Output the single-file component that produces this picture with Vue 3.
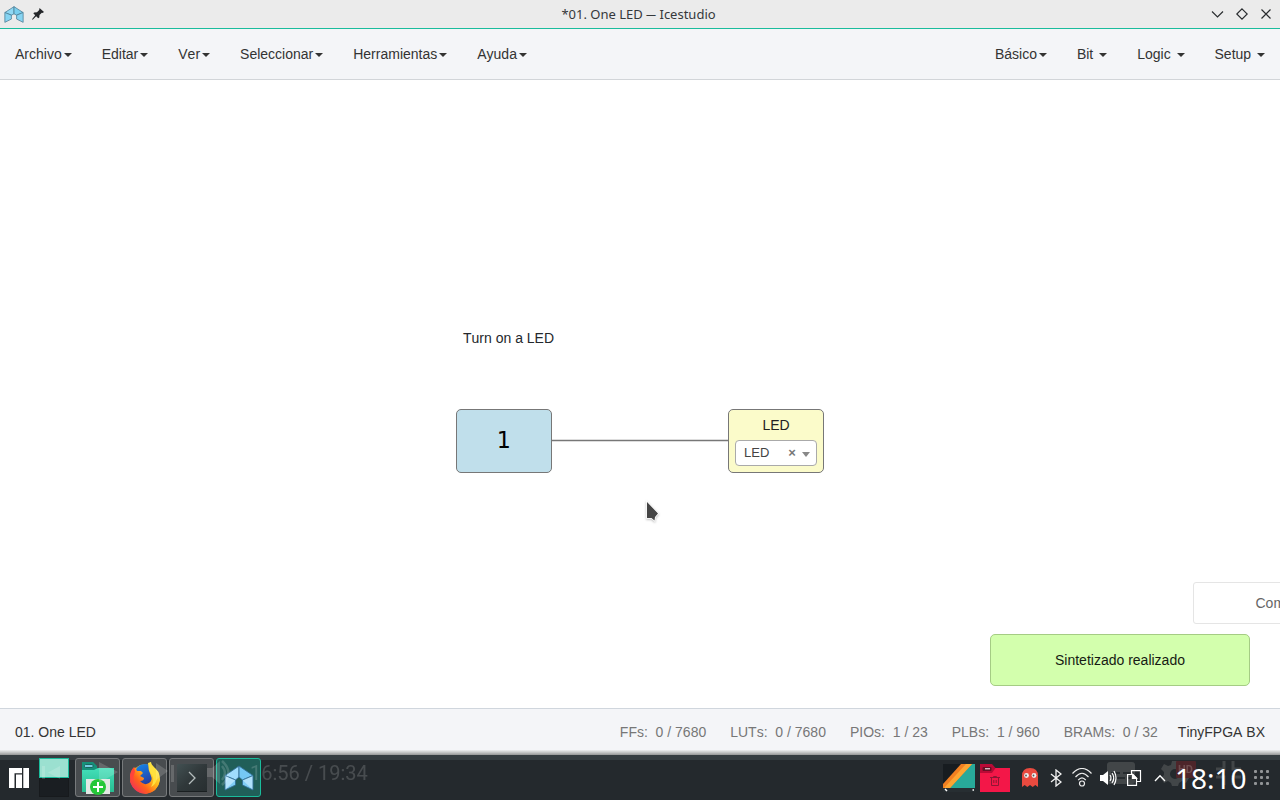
<script setup>
const leftMenus = ['Archivo', 'Editar', 'Ver', 'Seleccionar', 'Herramientas', 'Ayuda']
const rightMenus = ['Básico', 'Bit ', 'Logic ', 'Setup ']
const resources = [
  { name: 'FFs', value: '0 / 7680' },
  { name: 'LUTs', value: '0 / 7680' },
  { name: 'PIOs', value: '1 / 23' },
  { name: 'PLBs', value: '1 / 960' },
  { name: 'BRAMs', value: '0 / 32' },
]
const dots = [0, 1, 2, 3, 4, 5, 6, 7, 8]
</script>

<template>
  <div class="desktop">
    <header class="titlebar">
      <div class="title-left">
        <svg class="app-logo" width="20" height="17" viewBox="0 0 30 26" stroke="#4c7d96" stroke-width="1.2" stroke-linejoin="round">
          <path d="M15 1V12L11 14 1 10Z" fill="#8fd8f4" /><path d="M15 1V12L19 14 29 10Z" fill="#79cfef" />
          <path d="M1 10 11 14V20L1 25Z" fill="#86d4f2" /><path d="M29 10 19 14V20L29 25Z" fill="#86d4f2" />
        </svg>
        <svg width="12" height="12" viewBox="0 0 12 12" fill="#232629">
          <path d="M7.5 0 12 4 10.5 5 9.8 4.8 7.5 7 7.3 9.5 6.2 10.3 4.2 8.2 .7 11.8 0 11.3 3.2 7.2 1.3 5.3 2.2 4.5 5 4.3 7.2 2Z" />
        </svg>
      </div>
      <span class="window-title">*01. One LED <span class="dash">—</span> Icestudio</span>
      <svg class="window-controls" width="62" height="14" viewBox="0 0 62 14" fill="none" stroke="#292c2f" stroke-width="1.15">
        <path d="M1 4.5 6.5 10 12 4.5M31 1.8 36.2 7 31 12.2 25.8 7ZM50.5 2.5 59.5 11.5M59.5 2.5 50.5 11.5" />
      </svg>
    </header>

    <nav class="navbar">
      <div class="menu-group">
        <span v-for="m in leftMenus" :key="m" class="menu">{{ m }}<b class="caret"></b></span>
      </div>
      <div class="menu-group">
        <span v-for="m in rightMenus" :key="m" class="menu">{{ m }}<b class="caret"></b></span>
      </div>
    </nav>

    <main class="canvas">
      <span class="note">Turn on a LED</span>
      <svg class="wire" width="178" height="3" viewBox="0 0 178 3"><path d="M0 1.5H178" stroke="#777" stroke-width="1.6" /></svg>
      <div class="block constant">1</div>
      <div class="block output">
        <span class="block-label">LED</span>
        <div class="pin-select">
          <span>LED</span>
          <b class="clear">×</b>
          <i class="select-arrow"></i>
        </div>
      </div>
      <svg class="pointer" width="18" height="26" viewBox="0 0 18 26">
        <path d="M4 3V19H8.5L11.5 21.5 12 18 15 14.5Z" fill="#444" stroke="#fff" stroke-width="1.6" paint-order="stroke" />
      </svg>
      <div class="toast neutral">Comenzando</div>
      <div class="toast success">Sintetizado realizado</div>
    </main>

    <footer class="statusbar">
      <span>01. One LED</span>
      <div class="status-right">
        <span v-for="r in resources" :key="r.name" class="resource">{{ r.name }}:&nbsp; {{ r.value }}</span>
        <span class="board">TinyFPGA BX</span>
      </div>
    </footer>
    <div class="panel-shadow"></div>

    <section class="taskbar">
      <svg class="manjaro" width="20" height="20" viewBox="0 0 20 20" fill="#fff"><path d="M0 0H13V5.2H5.5V20H0ZM7 6.5H13V20H7ZM14.3 0H20V20H14.3Z" /></svg>
      <div class="pager"><i class="desk current"></i><i class="desk"></i></div>
      <div class="tasks">
        <span class="task">
          <svg width="34" height="34" viewBox="0 0 34 34">
            <defs><linearGradient id="folder" x1="0" y1="0" x2="0" y2="1"><stop offset="0" stop-color="#43dfb9" /><stop offset="1" stop-color="#28bd91" /></linearGradient></defs>
            <path d="M1 1H12L16 5V10H1Z" fill="#159179" />
            <rect x="3.5" y="3.5" width="8.5" height="3" rx="1" fill="#75cce1" stroke="#17675e" />
            <path d="M1 9H13L17 7H33V31H1Z" fill="url(#folder)" />
            <path d="M5 18H29V33H5Z" fill="#e3e8e5" />
            <circle cx="17" cy="26" r="8" fill="#25c739" />
            <path d="M17 21V31M12 26H22" stroke="#fff" stroke-width="2" />
          </svg>
        </span>
        <span class="task">
          <svg width="32" height="33" viewBox="0 0 32 33">
            <defs>
              <linearGradient id="fox" x1="1" y1="0" x2="0" y2="1"><stop offset=".15" stop-color="#fff04a" /><stop offset=".42" stop-color="#ffb719" /><stop offset=".65" stop-color="#ff621c" /><stop offset="1" stop-color="#e91579" /></linearGradient>
              <linearGradient id="globe" x1="0" y1="0" x2=".5" y2="1"><stop offset="0" stop-color="#128cf0" /><stop offset="1" stop-color="#273da0" /></linearGradient>
            </defs>
            <circle cx="16" cy="18" r="14.5" fill="url(#fox)" />
            <circle cx="16" cy="13.5" r="10.5" fill="url(#globe)" />
            <path d="M19 2 22 1 23 5Q31 9 31 19 29 31 17 33 5 32 1 21 1 12 6 6L8 10 12 10 14 12 11 15 15 17Q15 20 11 20 15 25 20 22 24 19 22 15 19 9 19 2Z" fill="url(#fox)" />
            <path d="M5 6 6 11Q3 17 5 22 1 19 1 15 1 10 5 6Z" fill="#ff443b" />
            <path d="M21 2Q29 8 28 18 27 23 22 26 26 19 23 14 18 8 21 2Z" fill="#ffe13e" />
          </svg>
        </span>
        <span class="task">
          <svg class="terminal-icon" width="30" height="28" viewBox="0 0 30 28">
            <defs><linearGradient id="term" x1="0" y1="0" x2="1" y2="1"><stop offset="0" stop-color="#425052" /><stop offset=".5" stop-color="#30383a" /><stop offset="1" stop-color="#272e30" /></linearGradient></defs>
            <rect width="30" height="28" fill="url(#term)" /><path d="M0 27.5H30" stroke="#1a1f21" />
            <path d="M12 8 18 14 12 20" fill="none" stroke="#b5bdbd" stroke-width="1.3" />
          </svg>
        </span>
        <span class="task active">
          <svg width="30" height="26" viewBox="0 0 30 26" stroke="#326f96" stroke-width=".9" stroke-linejoin="round">
            <path d="M15 1V12L11.5 15 1 10.5Z" fill="#a0ddfd" /><path d="M15 1V12L18.5 15 29 10.5Z" fill="#75c8f5" />
            <path d="M1 10.5 11.5 15V20L1 25Z" fill="#80cef5" stroke="none" /><path d="M29 10.5 18.5 15V20L29 25Z" fill="#80cef5" stroke="none" />
            <path d="M1 10.5 11.5 15 1 25Z" fill="#b5e4fc" stroke="none" /><path d="M29 10.5 18.5 15 29 25Z" fill="#b0e1fb" stroke="none" />
            <path d="M1 10.5 11.5 15V20L1 25ZM29 10.5 18.5 15V20L29 25Z" fill="none" />
          </svg>
        </span>
      </div>

      <div class="player-ghost" aria-hidden="true">
        <svg width="240" height="32" viewBox="0 0 240 32" fill="#fff">
          <path d="M42 9H45V22H42ZM60 9V22L48 15.5ZM99 5 118 15 99 26ZM156 6 168 14 156 23ZM171 8H174V25H171ZM207 11H212L220 4V27L212 20H207Z" />
          <path d="M222 9Q228 16 222 23M222 4Q235 16 222 28" fill="none" stroke="#fff" stroke-width="2.5" />
        </svg>
        <span class="ghost-time">16:56 / 19:34</span>
      </div>
      <svg class="player-tools" width="150" height="36" viewBox="0 0 150 36" fill="#4c5052">
        <rect x="7" y="6" width="28" height="22" rx="3" /><path d="M11 17H20M23 17H31M11 22H25M28 22H31" stroke="#272c2f" stroke-width="2" />
        <path fill-rule="evenodd" d="M72 5H78L79 9 82 10 86 8 89 13 86 16V19L89 22 86 27 82 25 79 27 78 30H72L71 27 68 25 64 27 61 22 64 19V16L61 13 64 8 68 10 71 9ZM75 13A5 5 0 1 0 75 23 5 5 0 1 0 75 13Z" />
        <rect x="76" y="5" width="20" height="17" rx="1" fill="#5b2429" /><text x="78" y="17" fill="#89595b" font-size="11" font-weight="bold">HD</text>
        <path d="M124 5V13H116M133 5V13H141M124 29V21H116M133 29V21H141" fill="none" stroke="#4c5052" stroke-width="3" />
      </svg>

      <div class="tray">
        <svg class="wall" width="32" height="28" viewBox="0 0 32 28">
          <rect width="32" height="28" fill="#28aa9a" /><path d="M0 0H20L0 22Z" fill="#171c20" /><path d="M18 0H29L7 24H0V20Z" fill="#f17f21" /><path d="M23 0H29L7 24H1Z" fill="#fda532" />
          <path d="M0 24H32V28H0Z" fill="#272e32" /><path d="M2 25 4 27M29.5 26H31" stroke="#fff" stroke-width="1.5" />
        </svg>
        <svg class="trash" width="30" height="28" viewBox="0 0 30 28">
          <path d="M0 4H30V28H0Z" fill="#f31748" /><path d="M0 0H12L15.5 4 12 9H0Z" fill="#b90a36" /><rect x="2.5" y="3" width="9" height="4" rx="1" fill="#680f25" /><path d="M5 4.8H10" stroke="#fff" />
          <path d="M10 13.5H20M13.5 13.5V12.5H16.5V13.5M11.5 13.5V21.5H18.5V13.5M13.8 16V19M16.2 16V19" fill="none" stroke="#8e1734" />
        </svg>
        <svg class="ghost" width="16" height="19" viewBox="0 0 16 19"><path d="M0 8Q0 0 8 0T16 8V19L13.3 17 10.7 19 8 17 5.3 19 2.7 17 0 19Z" fill="#e94a3f" /><circle cx="4.5" cy="7.5" r="2.4" fill="#eee" /><circle cx="12" cy="7.5" r="2.4" fill="#eee" /><circle cx="4" cy="7.5" r=".9" fill="#555" /><circle cx="11.5" cy="7.5" r=".9" fill="#555" /></svg>
        <svg class="bluetooth" width="12" height="18" viewBox="0 0 12 18" fill="none" stroke="#f4f4f4" stroke-width="1.3"><path d="M1 5 11 13 6 17V1L11 5 1 13" /></svg>
        <svg class="wifi" width="20" height="19" viewBox="0 0 20 19" fill="none" stroke="#eee" stroke-width="1.2"><path d="M.5 5.5Q10-4.5 19.5 5.5M3.5 9Q10 1.5 16.5 9M6.2 12.2Q10 7.5 13.8 12.2" /><circle cx="10" cy="15.5" r="2.5" /></svg>
        <svg class="speaker" width="17" height="16" viewBox="0 0 17 16" fill="none" stroke="#fff" stroke-width="1.2"><path d="M0 5H3L8 1V15L3 11H0Z" fill="#fff" stroke="none" /><path d="M10 5Q12 8 10 11M12 3Q15.5 8 12 13M14 1Q18 8 14 15" /></svg>
        <svg class="clipboard" width="15" height="16" viewBox="0 0 15 16" fill="none" stroke="#fff" stroke-width="1.2"><path d="M4.5 4V.6H13.5V11.5H10M.6 4.5H6L9.5 8V15.4H.6Z" /><path d="M5.5 4.5V8.5H9.5Z" fill="#fff" /></svg>
        <svg class="expand" width="12" height="8" viewBox="0 0 12 8" fill="none" stroke="#fff" stroke-width="1.3"><path d="M1 7 6 1.7 11 7" /></svg>
        <span class="clock">18:10</span>
        <span class="dots"><i v-for="d in dots" :key="d"></i></span>
      </div>
    </section>
  </div>
</template>

<style>
body { margin: 0; overflow: hidden; }
</style>

<style scoped>
* { box-sizing: border-box; }
.desktop { width: 1280px; height: 800px; display: flex; flex-direction: column; background: #fff; color: #333; font: 14px/20px "Liberation Sans", Arial, sans-serif; font-kerning: none; overflow: hidden; }
svg { display: block; flex: none; }
.titlebar { height: 29px; flex: none; display: grid; grid-template-columns: 1fr auto 1fr; align-items: center; background: #ebebeb; border-bottom: 1px solid #1abc9c; padding: 0 7px 0 4px; }
.title-left { display: flex; align-items: center; gap: 8px; }
.window-title { font: 13px/18px "Noto Sans", sans-serif; color: #35383b; white-space: nowrap; }
.dash { display: inline-block; font-size: 10px; line-height: 10px; position: relative; top: -1px; }
.window-controls { justify-self: end; }
.navbar { height: 51px; flex: none; display: flex; justify-content: space-between; background: #f4f5f8; border-bottom: 1px solid #d2d5d9; }
.menu-group { display: flex; }
.menu { padding: 15px; white-space: pre; }
.caret { display: inline-block; margin-left: 2px; border: 4px solid transparent; border-top-color: #333; border-bottom: 0; vertical-align: middle; }
.canvas { position: relative; height: 628px; flex: none; overflow: hidden; background: #fff; }
.note, .wire, .block, .pointer, .toast { position: absolute; }
.note { left: 463px; top: 248px; color: #24282c; }
.wire { left: 551px; top: 359px; }
.block { top: 329px; width: 96px; height: 64px; border: 1px solid #777; border-radius: 5px; }
.constant { left: 456px; background: #c0dfeb; color: #000; font: 23px/61px "DejaVu Sans Mono", monospace; text-align: center; padding-right: 1px; }
.output { left: 728px; background: #fbfbca; padding: 6px; text-align: center; color: #222; }
.block-label { display: block; height: 20px; line-height: 19px; }
.pin-select { display: flex; align-items: center; margin-top: 4px; height: 26px; border: 1px solid #aaa; border-radius: 4px; background: #fff; padding: 0 6px 1px 8px; color: #444; font-size: 13px; }
.clear { margin-left: 19px; font-size: 13px; color: #777; line-height: 20px; }
.select-arrow { margin: 4px 0 0 6px; border: 4px solid transparent; border-top: 5px solid #888; border-bottom: 0; }
.pointer { left: 643px; top: 419px; filter: drop-shadow(0 1px 1px #bbb); }
.toast { width: 260px; border: 1px solid #e5e5e5; border-radius: 3px; text-align: center; }
.neutral { left: 1193px; top: 502px; height: 42px; line-height: 40px; color: #666; padding-left: 61.5px; text-align: left; }
.success { left: 990px; top: 554px; height: 52px; line-height: 50px; color: #171b14; background: #d3ffad; border-color: #a5cc84; border-radius: 5px; }
.statusbar { height: 42px; flex: none; display: flex; justify-content: space-between; background: #f4f5f8; border-top: 1px solid #d0d6dd; padding: 13px 15px 0; }
.status-right { display: flex; }
.resource { color: #777; margin-right: 24px; white-space: nowrap; }
.resource:nth-last-child(2) { margin-right: 20px; }
.panel-shadow { height: 5px; flex: none; background: linear-gradient(#eeeeef, #c4c4c4 50%, #959595); }
.taskbar { height: 45px; flex: none; position: relative; display: flex; align-items: center; background: linear-gradient(#363c40 0 5px, #24292d 5px); padding: 0 11px 0 9px; }
.manjaro { margin-top: 1px; }
.pager { display: flex; flex-direction: column; margin-left: 10px; width: 30px; height: 39px; }
.desk { flex: 1; background: #1a1e22; border: 1px solid #171a1d; }
.desk.current { background: #9be0d0; border-color: #1abc9c; }
.tasks { display: flex; gap: 2px; margin-left: 6px; }
.task { display: flex; align-items: center; justify-content: center; width: 45px; height: 39px; background: #484c4f; border: 1px solid #777a7c; border-radius: 3px; }
.task.active { background: #205f59; border-color: #1abc9c; }
.player-ghost { position: absolute; left: 0; top: 2px; width: 380px; height: 32px; opacity: .16; pointer-events: none; }
.ghost-time { position: absolute; left: 250px; top: 4px; font: 20px/24px Roboto, sans-serif; color: #fff; white-space: nowrap; }
.player-tools { position: absolute; left: 1100px; top: 1px; opacity: .75; font-family: Roboto, sans-serif; }
.tray { position: relative; display: flex; align-items: center; margin-left: auto; height: 45px; }
.wall { margin-right: 5px; }
.trash { margin-right: 12px; }
.ghost { margin-right: 12px; }
.bluetooth { margin-right: 10px; }
.wifi { margin-right: 8px; }
.speaker { margin-right: 10px; }
.clipboard { margin-right: 12px; }
.expand { margin-right: 9px; }
.clock { width: 72px; color: #fff; font: 28px/40px "Noto Sans", sans-serif; }
.dots { display: grid; grid-template-columns: repeat(3, 3px); gap: 3px; margin-left: 7px; }
.dots i { width: 3px; height: 3px; border-radius: 1px; background: #929597; }
</style>
